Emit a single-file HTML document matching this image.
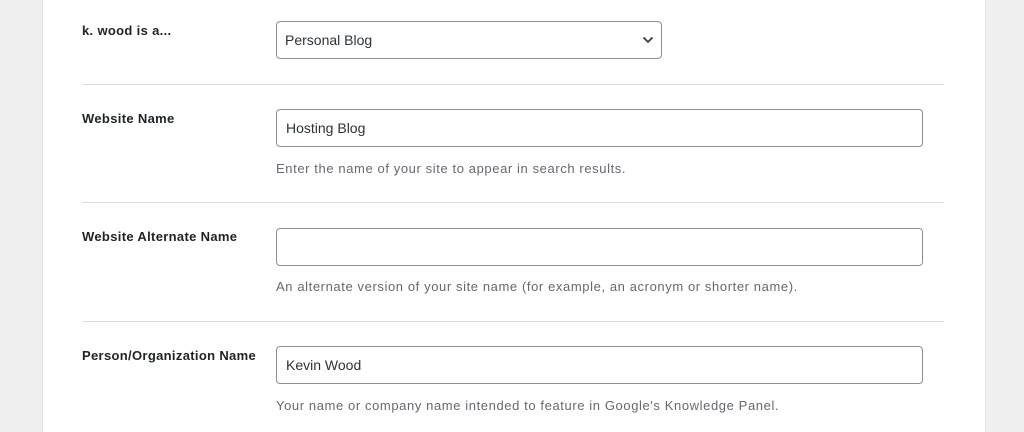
<!DOCTYPE html>
<html><head><style>
body{margin:0;width:1024px;height:432px;background:#f0f0f1;font-family:"Liberation Sans",sans-serif;overflow:hidden;position:relative}
.panel{position:absolute;left:42px;top:0;width:942px;height:432px;background:#fff;border-left:1px solid #e4e4e6;border-right:1px solid #e4e4e6}
.lab{position:absolute;left:82px;font-size:13px;font-weight:bold;color:#1d2327;letter-spacing:0.33px}
.box{position:absolute;left:276px;width:644px;height:36px;border:1px solid #8c8f94;border-radius:4px;background:#fff;font-size:14px;color:#2c3338;line-height:36px;padding-left:9px;box-sizing:content-box}
.help{position:absolute;left:276px;font-size:13px;color:#646970;letter-spacing:0.6px}
.sep{position:absolute;left:82px;width:862px;border-top:1px solid #dcdcde}
</style></head><body>
<div class="panel"></div>
<div class="lab" style="top:23px">k. wood is a...</div>
<div class="box" style="top:21px;width:376px;padding-left:8px">Personal Blog
<svg style="position:absolute;right:7px;top:14px" width="12" height="8" viewBox="0 0 12 8"><path d="M1.5 1.5L6 6l4.5-4.5" fill="none" stroke="#2c3338" stroke-width="1.6"/></svg></div>
<div class="sep" style="top:84px"></div>
<div class="lab" style="top:111px">Website Name</div>
<div class="box" style="top:109px;width:636px">Hosting Blog</div>
<div class="help" style="top:161px">Enter the name of your site to appear in search results.</div>
<div class="sep" style="top:202px"></div>
<div class="lab" style="top:229px">Website Alternate Name</div>
<div class="box" style="top:228px;width:636px"></div>
<div class="help" style="top:279px">An alternate version of your site name (for example, an acronym or shorter name).</div>
<div class="sep" style="top:321px"></div>
<div class="lab" style="top:348px">Person/Organization Name</div>
<div class="box" style="top:346px;width:636px">Kevin Wood</div>
<div class="help" style="top:398px">Your name or company name intended to feature in Google's Knowledge Panel.</div>
</body></html>
